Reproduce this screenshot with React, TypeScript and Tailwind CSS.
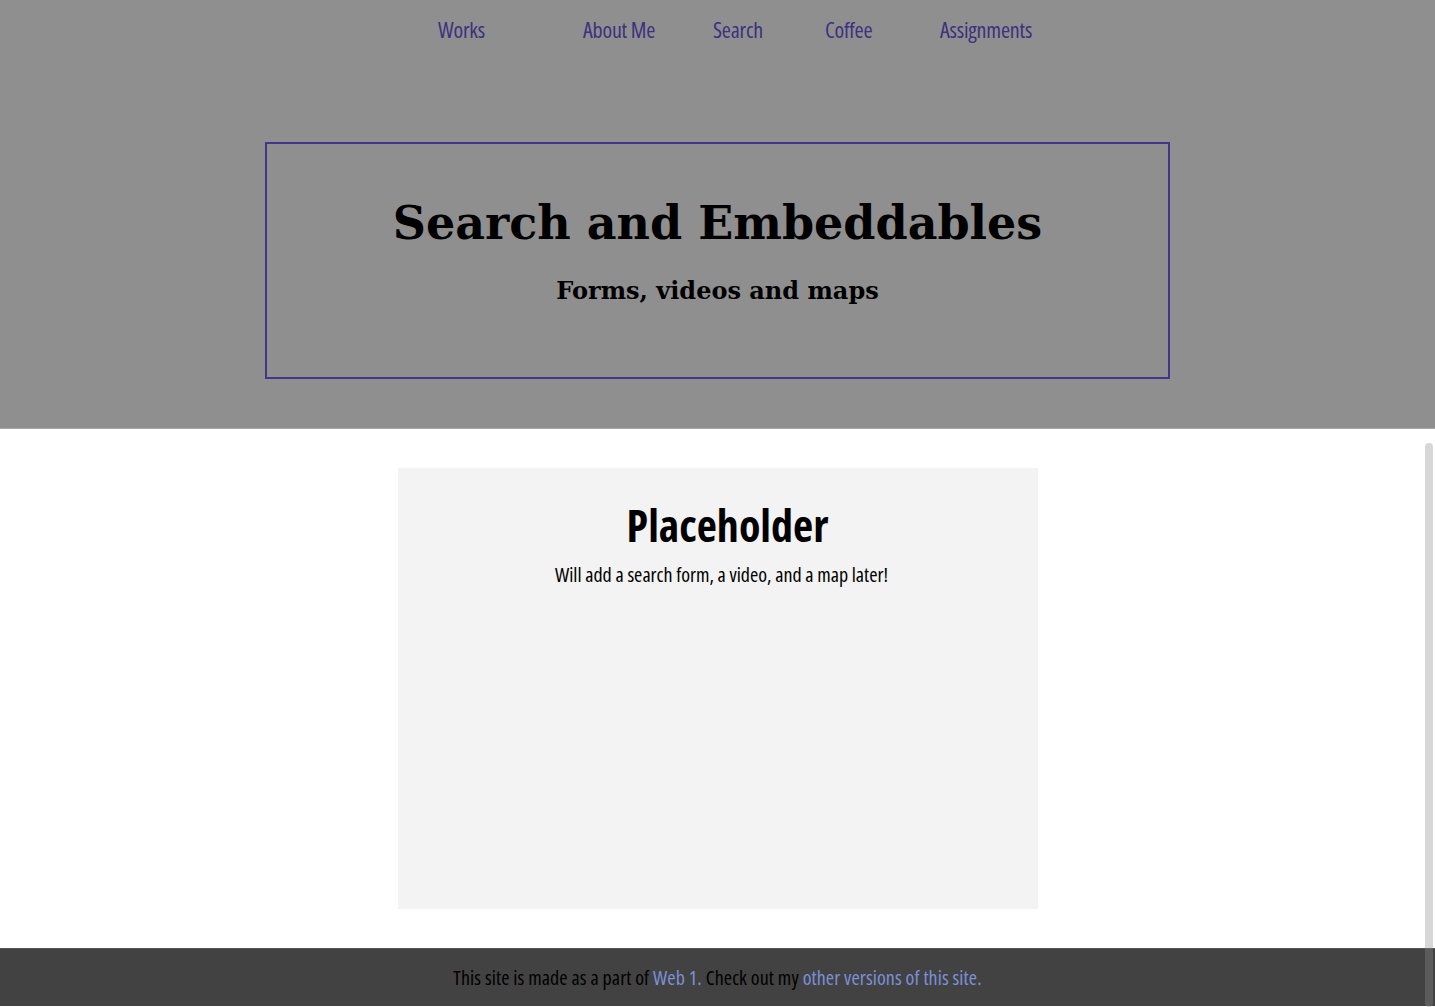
const condensed = { fontFamily: "'Open Sans', sans-serif", fontStretch: "75%" };

const navItems = [
  { label: "Works", cls: "w-[145px]" },
  { label: "About Me", cls: "w-[130px]" },
  { label: "Search", cls: "w-[112px]" },
  { label: "Coffee", cls: "w-[115px]" },
  { label: "Assignments", cls: "" },
];

export default function App() {
  return (
    <div className="relative min-h-screen bg-white">
      <header className="h-[429px] bg-[#8f8f8f] border-b border-[#a9a9a9]">
        <nav className="flex h-[60px] items-center pl-[438px] pb-[2px]" style={condensed}>
          {navItems.map((item) => (
            <a key={item.label} href="#" className={`text-[22px] font-medium tracking-[-0.2px] text-[#3b3180] ${item.cls}`}>
              {item.label}
            </a>
          ))}
        </nav>
        <div className="mx-auto mt-[82px] flex h-[237px] w-[905px] flex-col items-center border-2 border-[#41368a]">
          <h1 className="mt-[51px] font-['DejaVu_Serif',serif] text-[46px] font-bold leading-tight text-black">
            Search and Embeddables
          </h1>
          <h2 className="mt-[20px] font-['DejaVu_Serif',serif] text-[24px] font-bold text-black">
            Forms, videos and maps
          </h2>
        </div>
      </header>

      <main className="flex justify-center py-[39px]">
        <div className="flex h-[441px] w-[640px] flex-col items-center bg-[#f2f3f2]" style={condensed}>
          <h2 className="mt-[30px] pl-[20px] text-[44px] font-bold leading-tight text-black">Placeholder</h2>
          <p className="mt-[7px] pl-[8px] text-[20px] text-black">Will add a search form, a video, and a map later!</p>
        </div>
      </main>

      <footer className="flex h-[58px] items-center justify-center border-t border-[#555] bg-[#424242] text-[20px] tracking-[0.1px] text-black" style={condensed}>
        <span>
          This site is made as a part of <a href="#" className="text-[#7b90d8]">Web 1.</a> Check out my{" "}
          <a href="#" className="text-[#7b90d8]">other versions of this site.</a>
        </span>
      </footer>

      <div className="absolute right-[2px] top-[443px] bottom-0 w-[8px] rounded-full bg-[#8b8b8b]/35" />
    </div>
  );
}
